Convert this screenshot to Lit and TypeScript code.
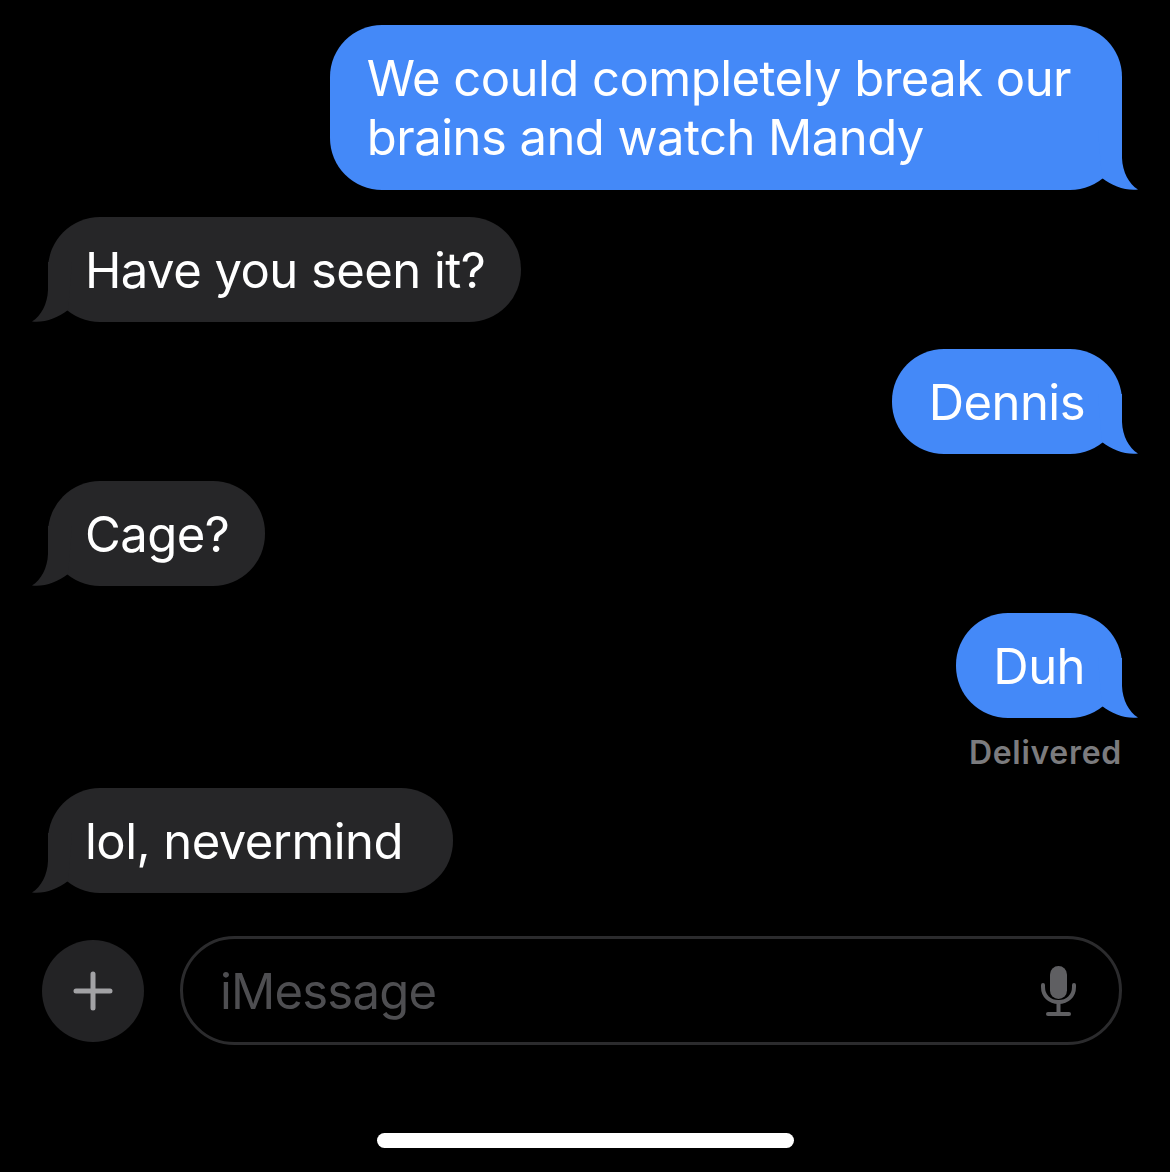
import { LitElement, html, css, svg } from "lit";
import { customElement } from "lit/decorators.js";

const tail = svg`<path d="M24 -20 L24 8 C24.5 22 31 34 40 39.5 C28 41 14 36 4 28 L0 -20 Z"/>`;

@customElement("app-root")
export class AppRoot extends LitElement {
  static styles = css`
    :host {
      display: block;
      width: 1170px;
      height: 1172px;
      background: #000;
      overflow: hidden;
      font-family: Inter, "Liberation Sans", sans-serif;
    }
    .page {
      display: flex;
      flex-direction: column;
      align-items: stretch;
      padding: 25px 48px 0;
    }
    .thread {
      display: flex;
      flex-direction: column;
      gap: 27px;
    }
    .bubble {
      position: relative;
      box-sizing: border-box;
      padding: 24px 37px 22px 37px;
      border-radius: 52px;
      font-size: 49px;
      font-weight: 400;
      line-height: 59px;
      letter-spacing: -0.55px;
      color: #fff;
      white-space: nowrap;
      width: fit-content;
    }
    .out {
      align-self: flex-end;
      background: #4489f8;
    }
    .in {
      align-self: flex-start;
      background: #262628;
      padding-right: 36px;
    }
    .wide {
      padding-right: 50px;
    }
    .two {
      padding-right: 51px;
      padding-bottom: 23px;
    }
    .tail {
      position: absolute;
      bottom: 0;
      width: 40px;
      height: 60px;
      display: block;
    }
    .out .tail {
      right: -16px;
      fill: #4489f8;
    }
    .in .tail {
      left: -16px;
      fill: #262628;
      transform: scaleX(-1);
    }
    .delivered {
      align-self: flex-end;
      margin: -11px 0 -11px 0;
      font-size: 32px;
      font-weight: 600;
      line-height: 38px;
      letter-spacing: 0.7px;
      color: #7b7b7e;
    }
    .composer {
      display: flex;
      align-items: center;
      gap: 36px;
      margin: 43px 0 0 -6px;
    }
    .plus {
      flex: none;
      width: 102px;
      height: 102px;
      border-radius: 50%;
      background: #232325;
      display: flex;
      align-items: center;
      justify-content: center;
    }
    .plus svg {
      width: 42px;
      height: 42px;
      display: block;
    }
    .field {
      flex: 1;
      box-sizing: border-box;
      height: 109px;
      border: 3px solid #2b2b2d;
      border-radius: 55px;
      display: flex;
      align-items: center;
      justify-content: space-between;
      padding: 0 39px 0 37px;
      font-size: 49px;
      letter-spacing: -0.8px;
      color: #4e4e51;
    }
    .placeholder {
      padding-top: 2px;
    }
    .mic {
      width: 40px;
      height: 50px;
      display: block;
    }
    .home {
      align-self: center;
      width: 417px;
      height: 15px;
      margin-top: 88px;
      border-radius: 8px;
      background: #fff;
    }
  `;

  private bubble(text: unknown, dir: "in" | "out", extra = "") {
    return html`<div class="bubble ${dir} ${extra}">
      ${text}
      <svg class="tail" viewBox="0 -20 40 60">${tail}</svg>
    </div>`;
  }

  render() {
    return html`
      <div class="page">
        <div class="thread">
          ${this.bubble(
            html`We could completely break our<br />brains and watch Mandy`,
            "out",
            "wide two"
          )}
          ${this.bubble("Have you seen it?", "in")}
          ${this.bubble("Dennis", "out")}
          ${this.bubble("Cage?", "in")}
          ${this.bubble("Duh", "out")}
          <div class="delivered">Delivered</div>
          ${this.bubble("lol, nevermind", "in", "wide")}
        </div>
        <div class="composer">
          <div class="plus">
            <svg viewBox="0 0 42 42">
              <path
                d="M21 4 V38 M4 21 H38"
                stroke="#a2a2a5"
                stroke-width="5"
                stroke-linecap="round"
                fill="none"
              />
            </svg>
          </div>
          <div class="field">
            <span class="placeholder">iMessage</span>
            <svg class="mic" viewBox="0 0 40 50">
              <rect x="10" y="0" width="17" height="33" rx="8.5" fill="#5f5f62" />
              <path
                d="M3 19 V21 C3 30 9.5 36 18.5 36 C27.5 36 34 30 34 21 V19"
                stroke="#5f5f62"
                stroke-width="4"
                stroke-linecap="round"
                fill="none"
              />
              <path d="M18.5 36 V46" stroke="#5f5f62" stroke-width="4" fill="none" />
              <path
                d="M8 48 H29"
                stroke="#5f5f62"
                stroke-width="4"
                stroke-linecap="round"
                fill="none"
              />
            </svg>
          </div>
        </div>
        <div class="home"></div>
      </div>
    `;
  }
}
